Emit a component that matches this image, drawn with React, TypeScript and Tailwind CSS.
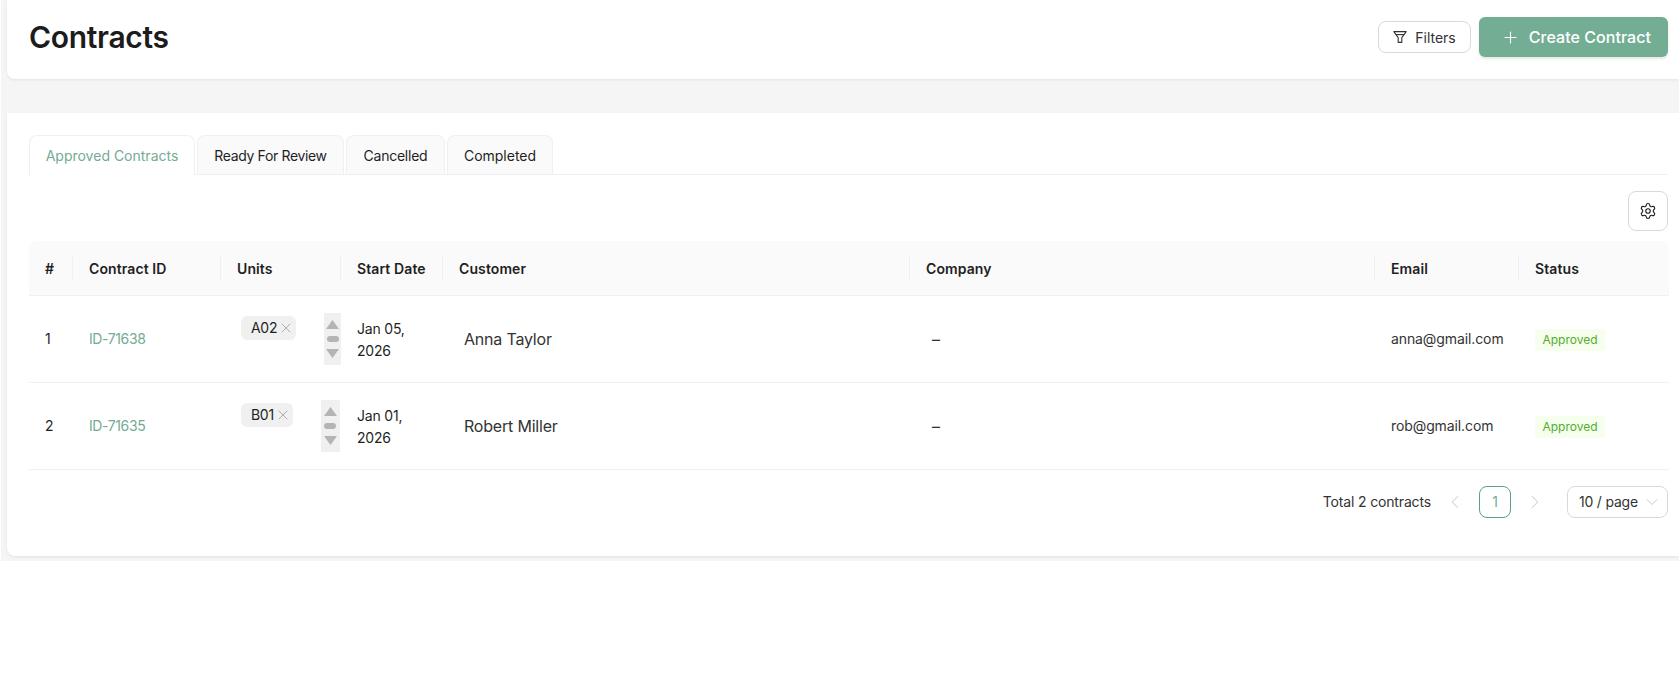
import React from "react";
import { ChevronDown, ChevronLeft, ChevronRight, Plus, Settings, X } from "lucide-react";

const GREEN = "text-[#73ab93]";

type Row = {
  no: number;
  id: string;
  unit: string;
  date: string[];
  customer: string;
  email: string;
};

const rows: Row[] = [
  { no: 1, id: "ID-71638", unit: "A02", date: ["Jan 05,", "2026"], customer: "Anna Taylor", email: "anna@gmail.com" },
  { no: 2, id: "ID-71635", unit: "B01", date: ["Jan 01,", "2026"], customer: "Robert Miller", email: "rob@gmail.com" },
];

const tabs = [
  { label: "Ready For Review", className: "w-[147px] tracking-[-0.35px]" },
  { label: "Cancelled", className: "w-[99px] tracking-[-0.25px]" },
  { label: "Completed", className: "w-[106px]" },
];

const columns = [
  { label: "#", width: "w-[44px]" },
  { label: "Contract ID", width: "w-[148px]" },
  { label: "Units", width: "w-[120px]" },
  { label: "Start Date", width: "w-[102px]" },
  { label: "Customer", width: "w-[467px]" },
  { label: "Company", width: "w-[465px]" },
  { label: "Email", width: "w-[144px]" },
  { label: "Status", width: "w-[150px]" },
];

const FunnelIcon = () => (
  <svg width="14" height="14" viewBox="0 0 14 14" fill="none" stroke="#333" strokeWidth="1.1" strokeLinejoin="round">
    <path d="M0.8 1.6h12.4L8.8 7.6v4.8H5.2V7.6L0.8 1.6Z" />
    <path d="M3 4.6h8" />
  </svg>
);

const ScrollStub = () => (
  <div className="ml-[28px] flex h-[52px] w-[19px] flex-col items-center justify-between bg-[#f0f0f0] py-[7px]">
    <svg width="13" height="9" viewBox="0 0 13 9" fill="#b4b4b4">
      <path d="M6.5 0 13 9H0Z" />
    </svg>
    <div className="h-[6px] w-[12px] rounded-full bg-[#b4b4b4]" />
    <svg width="13" height="9" viewBox="0 0 13 9" fill="#b4b4b4">
      <path d="M0 0h13L6.5 9Z" />
    </svg>
  </div>
);

export default function App() {
  return (
    <div className="min-h-[675px] bg-white pl-px font-['Inter','Liberation_Sans',sans-serif] text-[14px] text-[#1f1f1f]">
      <div className="h-[561px] overflow-hidden bg-[#f5f5f5] pl-[6px]">
        <header className="flex h-[79px] items-center justify-between rounded-bl-lg bg-white pb-[5px] pl-[22px] pr-[11px] shadow-[0_1px_3px_rgba(0,0,0,0.08)]">
          <h1 className="text-[30px] font-semibold tracking-[-0.3px] text-[#1c1c1c]">Contracts</h1>
          <div className="flex items-center gap-[8px]">
            <button className="flex h-[32px] w-[93px] items-center justify-center gap-[8px] rounded-lg border border-[#d9d9d9] bg-white text-[14px] text-[#333]">
              <FunnelIcon />
              Filters
            </button>
            <button className="flex h-[40px] w-[189px] items-center justify-end gap-[9px] rounded-md bg-[#73ae94] pr-[17px] text-[16px] font-medium tracking-[0.05px] text-white shadow-[0_2px_3px_rgba(0,0,0,0.1)]">
              <Plus size={19} strokeWidth={1.4} />
              Create Contract
            </button>
          </div>
        </header>

        <section className="mt-[34px] h-[443px] rounded-bl-lg bg-white pl-[22px] pr-[11px] pt-[22px] shadow-[0_1px_3px_rgba(0,0,0,0.08)]">
          <div className="flex h-[40px] gap-[2px] border-b border-[#f0f0f0]">
            <div className={`flex h-[40px] w-[166px] items-center justify-center rounded-t-lg border border-b-0 border-[#f0f0f0] bg-white ${GREEN}`}>
              Approved Contracts
            </div>
            {tabs.map((tab) => (
              <div
                key={tab.label}
                className={`flex h-[39px] items-center justify-center rounded-t-lg border border-b-0 border-[#f0f0f0] bg-[#fafafa] ${tab.className}`}
              >
                {tab.label}
              </div>
            ))}
          </div>

          <div className="mt-[16px] flex justify-end">
            <button className="flex h-[40px] w-[40px] items-center justify-center rounded-lg border border-[#d9d9d9] bg-white">
              <Settings size={18} strokeWidth={1.5} />
            </button>
          </div>

          <table className="mt-[10px] w-[1640px] table-fixed border-collapse">
            <thead>
              <tr className="h-[54px] border-b border-[#f0f0f0] bg-[#fafafa]">
                {columns.map((col, i) => (
                  <th
                    key={col.label}
                    className={`relative pl-[16px] pt-[1px] text-left text-[14px] font-semibold tracking-[0.1px] text-[#1f1f1f] ${col.width} ${i === 0 ? "rounded-tl-lg" : ""} ${i === columns.length - 1 ? "rounded-tr-lg" : ""}`}
                  >
                    {col.label}
                    {i < columns.length - 1 && (
                      <span className="absolute right-0 top-[14px] h-[26px] w-px bg-[#f0f0f0]" />
                    )}
                  </th>
                ))}
              </tr>
            </thead>
            <tbody>
              {rows.map((row) => (
                <tr key={row.no} className="h-[87px] border-b border-[#f0f0f0]">
                  <td className="pl-[16px]">{row.no}</td>
                  <td className={`pl-[16px] tracking-[-0.4px] ${GREEN}`}>{row.id}</td>
                  <td className="pl-[20px]">
                    <div className="flex items-start">
                      <span className="mt-[3px] flex h-[24px] items-center gap-[1px] rounded-md bg-[#f0f0f0] pl-[10px] pr-[2px] tracking-[-0.3px]">
                        {row.unit}
                        <X size={16} strokeWidth={1} className="text-[#8c8c8c]" />
                      </span>
                      <ScrollStub />
                    </div>
                  </td>
                  <td className="pl-[16px] pt-[2px] leading-[22px] tracking-[-0.2px]">
                    {row.date.map((line) => (
                      <div key={line}>{line}</div>
                    ))}
                  </td>
                  <td className="pl-[21px] text-[16px] tracking-[-0.2px] text-[#333]">{row.customer}</td>
                  <td className="pl-[22px] text-[16px] text-[#333]">–</td>
                  <td className="pl-[16px] tracking-[-0.1px] text-[#333]">{row.email}</td>
                  <td className="pl-[16px] pt-[2px]">
                    <span className="inline-block h-[22px] w-[70px] rounded-[4px] bg-[#f6ffed] text-center text-[12px] leading-[22px] text-[#52ad2b]">
                      Approved
                    </span>
                  </td>
                </tr>
              ))}
            </tbody>
          </table>

          <div className="mt-[16px] flex items-center justify-end">
            <span className="tracking-[-0.15px] text-[#333]">Total 2 contracts</span>
            <ChevronLeft size={22} strokeWidth={1} className="ml-[13px] text-[#bfbfbf]" />
            <span className="ml-[13px] flex h-[32px] w-[32px] items-center justify-center rounded-lg border border-[#5f9c8e] text-[#73ab93]">
              1
            </span>
            <ChevronRight size={22} strokeWidth={1} className="ml-[13px] text-[#bfbfbf]" />
            <div className="ml-[21px] flex h-[32px] w-[101px] items-center justify-between rounded-lg border border-[#d9d9d9] pl-[11px] pr-[5px] tracking-[-0.2px] text-[#333]">
              10 / page
              <ChevronDown size={20} strokeWidth={1} className="text-[#bfbfbf]" />
            </div>
          </div>
        </section>
      </div>
    </div>
  );
}
